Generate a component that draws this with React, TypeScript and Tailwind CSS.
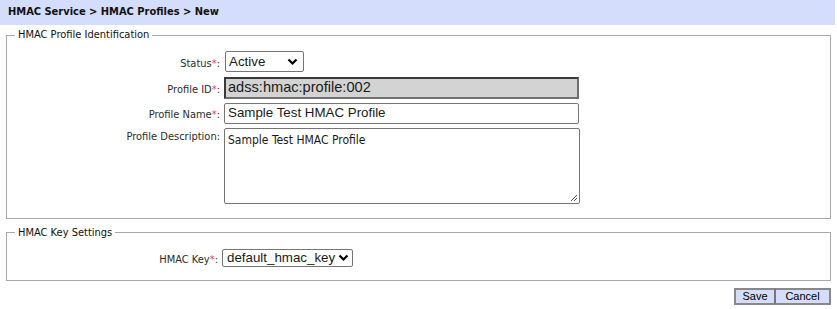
import React from "react";

const Req = () => <span className="text-[#e04848]">*</span>;

function Chevron() {
  return (
    <svg width="11" height="8" viewBox="0 0 11 8" className="shrink-0">
      <path d="M1.5 1.5 L5.5 5.5 L9.5 1.5" fill="none" stroke="#000" strokeWidth="2.2" />
    </svg>
  );
}

export default function App() {
  const label = "text-right text-[11px] text-[#2b2b2b] pr-[4px]";
  const arial = "font-['Liberation_Sans',Arial,sans-serif] text-[13.33px]";
  return (
    <div className="w-[837px] h-[309px] bg-white text-[#1a1a1a] font-['Tahoma','DejaVu_Sans_Condensed','DejaVu_Sans',sans-serif] overflow-hidden">
      <div className="h-[25px] w-[835px] bg-[#d4ddfb] pl-[8px] flex items-center text-[11px] font-bold text-[#111]">
        HMAC Service &gt; HMAC Profiles &gt; New
      </div>

      <fieldset className="ml-[6px] mt-[3px] w-[825px] border border-[#a9a9a9] pb-[14px]">
        <legend className="ml-[8px] px-[3px] text-[11px] leading-[14px] text-[#111]">HMAC Profile Identification</legend>
        <div className="grid grid-cols-[217px_1fr] gap-y-[4px] pt-[9px]">
          <div className={label + " pt-[5px]"}>Status<Req />:</div>
          <div className="pl-[1px]">
            <div className={"w-[79px] h-[21px] border border-[#767676] rounded-[2px] bg-white flex items-center justify-between pl-[3px] pr-[5px] " + arial}>
              <span>Active</span>
              <Chevron />
            </div>
          </div>

          <div className={label + " pt-[5px]"}>Profile ID<Req />:</div>
          <div>
            <div className="w-[355px] h-[22px] border-2 border-t-[#3a3a3a] border-l-[#3a3a3a] border-r-[#707070] border-b-[#707070] bg-[#d3d3d3] flex items-center pl-[2px] font-['Liberation_Sans',Arial,sans-serif] text-[14.6px]">
              adss:hmac:profile:002
            </div>
          </div>

          <div className={label + " pt-[4px]"}>Profile Name<Req />:</div>
          <div>
            <div className={"w-[355px] h-[21px] border border-[#767676] rounded-[2px] bg-white flex items-center pl-[3px] " + arial}>
              Sample Test HMAC Profile
            </div>
          </div>

          <div className={label + " pt-[1px]"}>Profile Description:</div>
          <div>
            <div className="relative w-[356px] h-[76px] border border-[#767676] rounded-[2px] bg-white pl-[3px] pt-[2px] text-[12px]">
              Sample Test HMAC Profile
              <svg width="8" height="8" viewBox="0 0 8 8" className="absolute right-[1px] bottom-[1px]">
                <path d="M7 1 L1 7 M7 4 L4 7" stroke="#555" strokeWidth="1" />
              </svg>
            </div>
          </div>
        </div>
      </fieldset>

      <fieldset className="ml-[6px] mt-[7px] w-[825px] border border-[#a9a9a9] pb-[12px]">
        <legend className="ml-[8px] px-[3px] text-[11px] leading-[14px] text-[#111]">HMAC Key Settings</legend>
        <div className="grid grid-cols-[215px_1fr] pt-[9px]">
          <div className={label + " pt-[3px]"}>HMAC Key<Req />:</div>
          <div>
            <div className={"w-[131px] h-[18px] border border-[#767676] rounded-[2px] bg-white flex items-center justify-between pl-[4px] pr-[3px] " + arial}>
              <span>default_hmac_key</span>
              <Chevron />
            </div>
          </div>
        </div>
      </fieldset>

      <div className="w-[831px] flex justify-end mt-[7px]">
        <button className="h-[17px] w-[42px] bg-[#d4ddfb] border-2 border-[#888] border-r-[#777] font-['Liberation_Sans',Arial,sans-serif] text-[11px] leading-[13px] text-black">Save</button>
        <button className="h-[17px] w-[55px] bg-[#d4ddfb] border-2 border-[#888] border-l-0 font-['Liberation_Sans',Arial,sans-serif] text-[11px] leading-[13px] text-black">Cancel</button>
      </div>
    </div>
  );
}
